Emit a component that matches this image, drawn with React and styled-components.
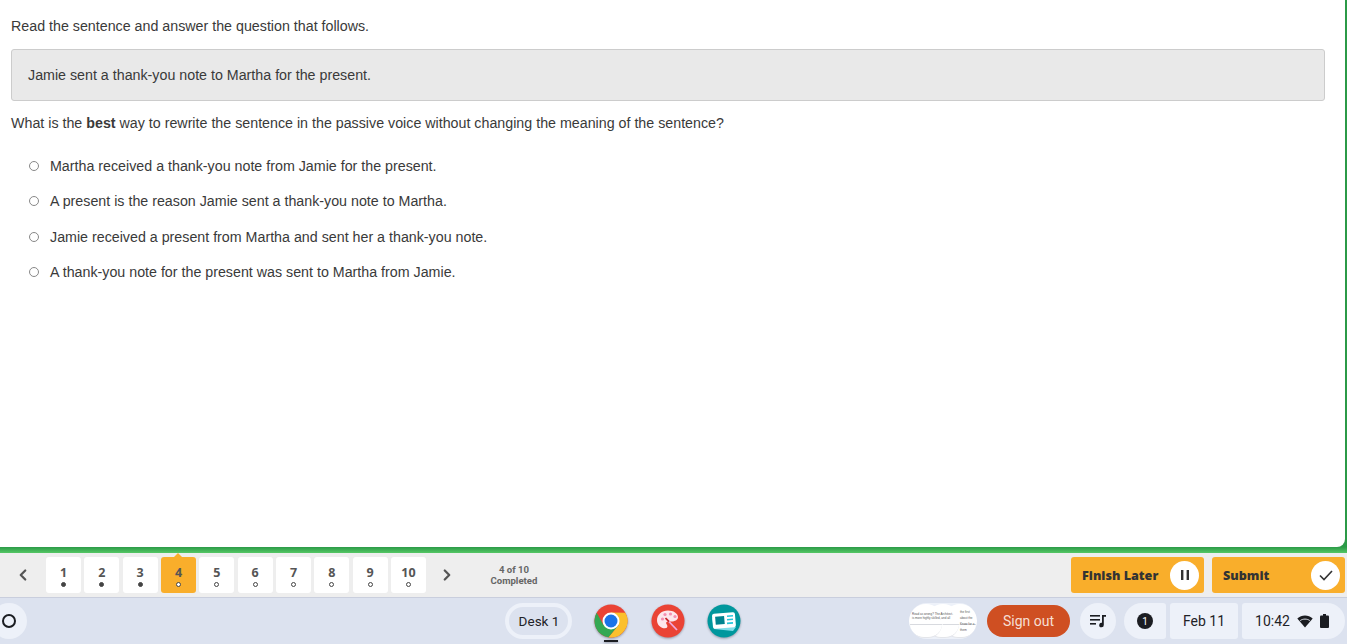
import React from 'react'
import styled, { createGlobalStyle } from 'styled-components'
import { ChevronLeft, ChevronRight } from 'lucide-react'

const GlobalStyle = createGlobalStyle`
  html, body {
    margin: 0;
    height: 100%;
    overflow: hidden;
    background: white;
  }
  #root {
    height: 100%;
  }
`

const Page = styled.div`
  display: flex;
  flex-direction: column;
  height: 644px;
  width: 1347px;
  font-family: 'Liberation Sans', Arial, sans-serif;
`

const Stage = styled.div`
  height: 553px;
  flex: none;
  box-sizing: border-box;
  padding: 0 2px 6px 0;
  background: linear-gradient(to bottom, #2b9a47 0, #2b9a47 547px, #55c765 553px);
`

const Sheet = styled.main`
  height: 100%;
  box-sizing: border-box;
  padding: 16px 20px 0 11px;
  background: white;
  border-bottom-right-radius: 8px;
  color: #3a3a3a;
  font-size: 14.25px;
  line-height: 20px;
`

const Instruction = styled.p`
  margin: 0 0 13px;
`

const Passage = styled.div`
  box-sizing: border-box;
  height: 52px;
  padding-left: 16px;
  display: flex;
  align-items: center;
  background: #e9e9e9;
  border: 1px solid #ccc;
  border-radius: 3px;
`

const Question = styled.p`
  margin: 12px 0 15.4px;
`

const Options = styled.div`
  padding-left: 18px;
`

const Option = styled.label`
  display: flex;
  align-items: center;
  gap: 11px;
  height: 35.33px;
`

const Radio = styled.span`
  width: 10px;
  height: 10px;
  box-sizing: border-box;
  border: 1px solid #888;
  border-radius: 50%;
  background: white;
`

const NavBar = styled.div`
  height: 44px;
  flex: none;
  box-sizing: border-box;
  padding: 4px 2px 4px 0;
  display: flex;
  align-items: flex-start;
  background: #eee;
  color: #555;
`

const Arrow = styled.span`
  width: ${(p) => p.$width}px;
  height: 36px;
  flex: none;
  display: flex;
  align-items: center;
  justify-content: center;
  color: #555;
`

const Tabs = styled.div`
  display: flex;
  gap: 3.33px;
`

const Tab = styled.div`
  position: relative;
  width: 35px;
  height: 36px;
  box-sizing: border-box;
  padding-top: 8px;
  border-radius: 3px;
  background: ${(p) => (p.$active ? '#f9ae2b' : 'white')};
  color: #555;
  font-family: 'Open Sans', sans-serif;
  font-weight: 700;
  font-size: 12.5px;
  line-height: 15px;
  text-align: center;

  &::before {
    content: '';
    display: ${(p) => (p.$active ? 'block' : 'none')};
    position: absolute;
    top: -4px;
    left: 13px;
    border-left: 4.5px solid transparent;
    border-right: 4.5px solid transparent;
    border-bottom: 4px solid #f9ae2b;
  }
`

const Dot = styled.span`
  display: block;
  width: 5px;
  height: 5px;
  box-sizing: border-box;
  margin: 2px auto 0;
  border-radius: 50%;
  border: 1px solid #444;
  background: ${(p) => (p.$done ? '#444' : 'white')};
`

const Progress = styled.div`
  width: 62px;
  margin: 7px 0 0 15px;
  flex: none;
  font-family: Roboto, sans-serif;
  font-weight: 700;
  font-size: 9.6px;
  line-height: 11px;
  text-align: center;
  color: #666;
`

const Actions = styled.div`
  margin-left: auto;
  display: flex;
  gap: 8px;
`

const ActionButton = styled.button`
  width: 133px;
  height: 36px;
  box-sizing: border-box;
  padding: 0 5px 0 11px;
  display: flex;
  align-items: center;
  justify-content: space-between;
  border: 0;
  border-radius: 3px;
  background: #f9ae2b;
  color: #333;
  font-family: 'Noto Sans', sans-serif;
  font-weight: 900;
  font-size: 12.6px;
`

const ActionIcon = styled.span`
  width: 29px;
  height: 29px;
  display: flex;
  align-items: center;
  justify-content: center;
  border-radius: 50%;
  background: white;
`

const Shelf = styled.footer`
  flex: 1;
  box-sizing: border-box;
  padding: 5px 2px 5px 0;
  display: flex;
  align-items: center;
  background: #dce2ef;
  border-top: 1px solid #c9cedd;
  color: #1f2227;
  font-family: Roboto, sans-serif;
  font-size: 14px;
`

const Launcher = styled.div`
  width: 36px;
  height: 36px;
  margin-left: -9px;
  flex: none;
  box-sizing: border-box;
  display: flex;
  align-items: center;
  justify-content: center;
  border-radius: 50%;
  background: #edf1f9;

  &::after {
    content: '';
    width: 14px;
    height: 14px;
    box-sizing: border-box;
    border: 2px solid #1b1d22;
    border-radius: 50%;
  }
`

const DeskButton = styled.div`
  width: 67px;
  height: 36px;
  margin-left: 478px;
  flex: none;
  box-sizing: border-box;
  display: flex;
  align-items: center;
  justify-content: center;
  border: 4px solid #edf1f9;
  border-radius: 18px;
  background: #dce2ef;
  font-size: 13.5px;
  padding-left: 1px;
`

const Apps = styled.div`
  width: 157px;
  margin-left: 22px;
  flex: none;
  display: flex;
  gap: 22.5px;
`

const AppIcon = styled.div`
  position: relative;
  width: 34px;
  height: 34px;
  filter: drop-shadow(0 1px 1px rgba(60, 64, 80, 0.45));

  &::after {
    content: '';
    display: ${(p) => (p.$open ? 'block' : 'none')};
    position: absolute;
    left: 10px;
    bottom: -4px;
    width: 14px;
    height: 2px;
    background: #1b1d22;
  }
`

const Thumbs = styled.div`
  position: relative;
  width: 68px;
  height: 36px;
  margin-left: 158px;
  flex: none;
  border-radius: 18px;
  overflow: hidden;
  background: #edf1f9;
`

const ThumbPage = styled.div`
  position: absolute;
  top: 1px;
  left: ${(p) => p.$left}px;
  width: 34px;
  height: 34px;
  box-sizing: border-box;
  border-radius: 50%;
  background: white;
`

const ThumbRule = styled.div`
  position: absolute;
  top: 20px;
  left: 1px;
  right: 1px;
  height: 14px;
  box-sizing: border-box;
  border-top: 1px solid #d8dadf;
  border-radius: 0 0 17px 17px;
  border-bottom: 1px solid #e3e5ea;
`

const ThumbText = styled.div`
  position: absolute;
  top: ${(p) => p.$top}px;
  left: ${(p) => p.$left}px;
  color: #555;
  font-family: 'Liberation Sans', sans-serif;
  font-size: 3px;
  line-height: ${(p) => p.$line}px;
  white-space: nowrap;
`

const SignOut = styled.button`
  width: 83px;
  height: 32px;
  margin-left: 10px;
  flex: none;
  border: 0;
  border-radius: 16px;
  background: #cf4f22;
  color: #f6dfd4;
  font-family: Roboto, sans-serif;
  font-size: 14px;
`

const Tray = styled.div`
  height: 36px;
  flex: none;
  box-sizing: border-box;
  display: flex;
  align-items: center;
  justify-content: center;
  background: #edf1f9;
  width: ${(p) => p.$width}px;
  margin-left: ${(p) => p.$gap}px;
  gap: ${(p) => p.$inner || 0}px;
  border-radius: ${(p) => p.$radius};
`

const ClockTray = styled(Tray)`
  padding-right: 3px;
`

const Badge = styled.span`
  width: 16px;
  height: 16px;
  display: flex;
  align-items: center;
  justify-content: center;
  border-radius: 50%;
  background: #1b1d22;
  color: white;
  font-size: 10px;
`

function ChromeIcon() {
  return (
    <svg width="34" height="34" viewBox="0 0 34 34">
      <circle cx="17" cy="17" r="16.5" fill="#ea4335" />
      <path d="M17 8.5 L31.3 8.75 A16.5 16.5 0 0 1 14.5 33.3 L24.4 21.25 Z" fill="#fbc02d" />
      <path d="M24.4 21.25 L14.5 33.3 A16.5 16.5 0 0 1 2.7 8.75 L9.6 21.25 Z" fill="#34a853" />
      <circle cx="17" cy="17" r="8.5" fill="white" />
      <circle cx="17" cy="17" r="6.5" fill="#1a73e8" />
    </svg>
  )
}

function PaletteIcon() {
  return (
    <svg width="34" height="34" viewBox="0 0 34 34">
      <circle cx="17" cy="17" r="16.5" fill="#ea4335" />
      <path
        d="M17 6.5c-6.2 0-11 4.2-11 9.7 0 4.8 3.9 8.1 8 8.1 1.6 0 2.4-.9 2.4-2 0-1.5-1.3-1.9-1.3-3.2 0-1 .8-1.6 2-1.6h3.2c3.5 0 6.7-1.4 6.7-4.2 0-4-4.6-6.8-10-6.8z"
        fill="#fde7ec"
      />
      <circle cx="11.5" cy="15" r="1.6" fill="#f48fb1" />
      <circle cx="14" cy="10.5" r="1.6" fill="#f48fb1" />
      <circle cx="19.5" cy="10" r="1.6" fill="#f48fb1" />
      <circle cx="24" cy="12.5" r="1.6" fill="#f48fb1" />
      <path d="M15 14.5 L26 26" stroke="#f0a8e0" strokeWidth="1.8" />
      <path d="M14.5 14 L18 17.7" stroke="#c62828" strokeWidth="1.8" />
    </svg>
  )
}

function NewsIcon() {
  return (
    <svg width="34" height="34" viewBox="0 0 34 34">
      <circle cx="17" cy="17" r="16.5" fill="#00979d" />
      <path d="M5 14 L7 25 L26 27 L29 23 Z" fill="#80deea" />
      <rect x="5.5" y="9" width="23" height="15" rx="2" transform="rotate(-5 17 17)" fill="white" />
      <rect x="8.5" y="12" width="9" height="8" fill="#00838f" transform="rotate(-5 17 17)" />
      <path d="M20 12.2l6-.5M20 15.8l6-.5M20 19.4l6-.5" stroke="#26c6da" strokeWidth="1.6" />
    </svg>
  )
}

function PlaylistIcon() {
  return (
    <svg width="16" height="14" viewBox="0 0 16 14" fill="#1b1d22">
      <rect x="0" y="1" width="10" height="1.6" />
      <rect x="0" y="5" width="10" height="1.6" />
      <rect x="0" y="9" width="6" height="1.6" />
      <path d="M12 1h4v1.8h-2.2V11a2.3 2.3 0 1 1-1.8-2.2z" />
    </svg>
  )
}

function WifiIcon() {
  return (
    <svg width="16" height="13" viewBox="0 0 16 13">
      <path d="M8 12.5 L0.3 3.6 C4.6 -0.4 11.4 -0.4 15.7 3.6 Z" fill="#1b1d22" />
      <path d="M3.2 5.6 C5.8 3.6 10.2 3.6 12.8 5.6" fill="none" stroke="#edf1f9" strokeWidth="0.9" />
    </svg>
  )
}

function BatteryIcon() {
  return (
    <svg width="9" height="14" viewBox="0 0 9 14" fill="#1b1d22">
      <rect x="3" y="0" width="3" height="2" />
      <rect x="0" y="1.5" width="9" height="12.5" rx="1" />
    </svg>
  )
}

const options = [
  'Martha received a thank-you note from Jamie for the present.',
  'A present is the reason Jamie sent a thank-you note to Martha.',
  'Jamie received a present from Martha and sent her a thank-you note.',
  'A thank-you note for the present was sent to Martha from Jamie.',
]

const tabs = [1, 2, 3, 4, 5, 6, 7, 8, 9, 10]

export default function App() {
  return (
    <Page>
      <GlobalStyle />
      <Stage>
        <Sheet>
          <Instruction>Read the sentence and answer the question that follows.</Instruction>
          <Passage>Jamie sent a thank-you note to Martha for the present.</Passage>
          <Question>
            What is the <b>best</b> way to rewrite the sentence in the passive voice without
            changing the meaning of the sentence?
          </Question>
          <Options>
            {options.map((text) => (
              <Option key={text}>
                <Radio />
                {text}
              </Option>
            ))}
          </Options>
        </Sheet>
      </Stage>
      <NavBar>
        <Arrow $width={46}>
          <ChevronLeft size={18} strokeWidth={3} />
        </Arrow>
        <Tabs>
          {tabs.map((n) => (
            <Tab key={n} $active={n === 4}>
              {n}
              <Dot $done={n < 4} />
            </Tab>
          ))}
        </Tabs>
        <Arrow $width={42}>
          <ChevronRight size={18} strokeWidth={3} />
        </Arrow>
        <Progress>
          4 of 10
          <br />
          Completed
        </Progress>
        <Actions>
          <ActionButton>
            Finish Later
            <ActionIcon>
              <svg width="10" height="10" viewBox="0 0 10 10" fill="#333">
                <rect x="1" y="0" width="2.4" height="10" />
                <rect x="6.6" y="0" width="2.4" height="10" />
              </svg>
            </ActionIcon>
          </ActionButton>
          <ActionButton>
            Submit
            <ActionIcon>
              <svg width="14" height="11" viewBox="0 0 14 11" fill="none" stroke="#333" strokeWidth="1.6">
                <path d="M1 5.5 L5 9.5 L13 1" />
              </svg>
            </ActionIcon>
          </ActionButton>
        </Actions>
      </NavBar>
      <Shelf>
        <Launcher />
        <DeskButton>Desk 1</DeskButton>
        <Apps>
          <AppIcon $open>
            <ChromeIcon />
          </AppIcon>
          <AppIcon>
            <PaletteIcon />
          </AppIcon>
          <AppIcon>
            <NewsIcon />
          </AppIcon>
        </Apps>
        <Thumbs>
          <ThumbPage $left={34}>
            <ThumbRule />
          </ThumbPage>
          <ThumbPage $left={17}>
            <ThumbRule />
          </ThumbPage>
          <ThumbPage $left={0}>
            <ThumbRule />
          </ThumbPage>
          <ThumbText $left={3} $top={9} $line={4}>
            Read as wrong? The Architect.
            <br />
            is more highly skilled, and all
          </ThumbText>
          <ThumbText $left={51} $top={6} $line={6}>
            the first
            <br />
            about the
            <br />
            Know for a
            <br />
            them
          </ThumbText>
        </Thumbs>
        <SignOut>Sign out</SignOut>
        <Tray $width={36} $gap={10} $radius="18px">
          <PlaylistIcon />
        </Tray>
        <Tray $width={42} $gap={8} $radius="18px 3px 3px 18px">
          <Badge>1</Badge>
        </Tray>
        <Tray $width={68} $gap={4} $radius="3px">
          Feb 11
        </Tray>
        <ClockTray $width={103} $gap={4} $inner={7} $radius="3px 18px 18px 3px">
          10:42
          <WifiIcon />
          <BatteryIcon />
        </ClockTray>
      </Shelf>
    </Page>
  )
}
